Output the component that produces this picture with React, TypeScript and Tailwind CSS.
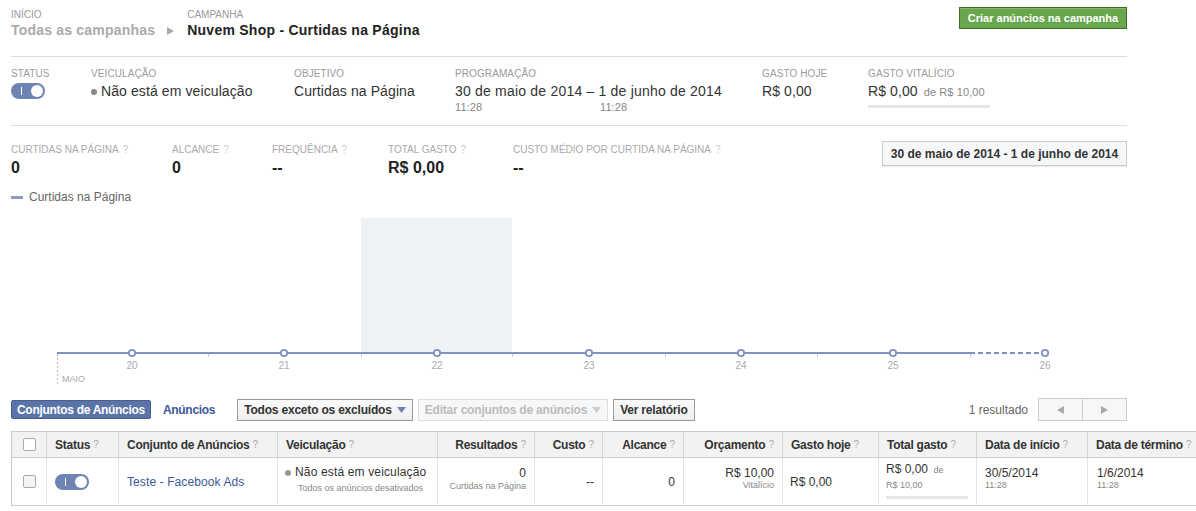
import React from "react";

const Q = () => <span className="font-normal text-[#aaa] text-[10px] ml-[3px] tracking-normal">?</span>;

const Toggle = () => (
  <div className="w-[34px] h-[16px] rounded-full bg-[#6d84b4] relative flex items-center">
    <div className="absolute left-[10px] top-[4px] w-[1px] h-[8px] bg-white" />
    <div className="absolute right-[2px] top-[2px] w-[12px] h-[12px] rounded-full bg-white" />
  </div>
);

const Label = ({ children }: { children: React.ReactNode }) => (
  <div className="text-[10px] leading-[12px] text-[#9a9a9a] uppercase">{children}</div>
);

const Chart = () => {
  const circles = [132, 284, 437, 589, 741, 893, 1045];
  const ticks = [208, 361, 512, 665, 817, 970];
  const labels = ["20", "21", "22", "23", "24", "25", "26"];
  return (
    <svg width={1196} height={176} className="block">
      <rect x={361} y={8} width={151} height={135} fill="#eef1f6" />
      <line x1={57} y1={143} x2={970} y2={143} stroke="#7f92c3" strokeWidth={2} />
      <line x1={970} y1={143} x2={1045} y2={143} stroke="#7f92c3" strokeWidth={2} strokeDasharray="5 3" />
      {ticks.map((t) => (
        <line key={t} x1={t + 0.5} y1={144} x2={t + 0.5} y2={147} stroke="#ccc" strokeWidth={1} />
      ))}
      <line x1={57.5} y1={144} x2={57.5} y2={174} stroke="#bbb" strokeWidth={1} strokeDasharray="2 2" />
      {circles.map((c) => (
        <circle key={c} cx={c} cy={143} r={3.2} fill="white" stroke="#7f92c3" strokeWidth={1.8} />
      ))}
      {circles.map((c, i) => (
        <text key={c} x={c} y={159} textAnchor="middle" fontSize={10} fill="#aaa" fontFamily="Liberation Sans, Arial, sans-serif">
          {labels[i]}
        </text>
      ))}
      <text x={62} y={172} fontSize={9} fill="#aaa" fontFamily="Liberation Sans, Arial, sans-serif">MAIO</text>
    </svg>
  );
};

const Dd = ({ color }: { color: string }) => (
  <svg width={9} height={6} className="ml-[5px]" viewBox="0 0 9 6">
    <polygon points="0,0 9,0 4.5,6" fill={color} />
  </svg>
);

export default function App() {
  const th = "h-[25px] px-2 text-[12px] font-bold tracking-[-0.25px] text-[#333] border-r border-[#d6d6d6] whitespace-nowrap";
  const td = "border-r border-[#e4e4e4]";
  return (
    <div className="w-[1196px] h-[511px] overflow-hidden bg-white font-['Liberation_Sans',Arial,sans-serif] text-[#333]">
      <div className="ml-[11px] w-[1116px]">
        {/* Header */}
        <div className="flex justify-between border-b border-[#ddd] h-[57px]">
          <div className="flex pt-[9px]">
            <div>
              <Label>Início</Label>
              <div className="text-[14px] leading-[18px] font-bold text-[#aaa] tracking-[0.2px]">Todas as campanhas</div>
            </div>
            <div className="mt-[18px] ml-[12px] mr-[13px]">
              <svg width={7} height={8} viewBox="0 0 7 8"><polygon points="0,0 7,4 0,8" fill="#aaa" /></svg>
            </div>
            <div>
              <Label>Campanha</Label>
              <div className="text-[14px] leading-[18px] font-bold text-[#222] tracking-[0.25px]">Nuvem Shop - Curtidas na Página</div>
            </div>
          </div>
          <div className="pt-[7px]">
            <button className="h-[22px] w-[168px] bg-[#69a74e] border border-[#3b6e22] text-white text-[11px] font-bold flex items-center justify-center shadow-[inset_0_1px_0_rgba(255,255,255,0.2)]">
              Criar anúncios na campanha
            </button>
          </div>
        </div>

        {/* Status row */}
        <div className="flex border-b border-[#ddd] h-[69px] pt-[11px] tracking-[0.1px]">
          <div className="w-[80px]">
            <Label>Status</Label>
            <div className="mt-[3px]"><Toggle /></div>
          </div>
          <div className="w-[203px]">
            <Label>Veiculação</Label>
            <div className="mt-[2px] text-[14px] leading-[18px] flex items-center">
              <span className="inline-block w-[6px] h-[6px] rounded-full bg-[#888] mr-[4px] mt-[1px]" />
              Não está em veiculação
            </div>
          </div>
          <div className="w-[161px]">
            <Label>Objetivo</Label>
            <div className="mt-[2px] text-[14px] leading-[18px]">Curtidas na Página</div>
          </div>
          <div className="w-[307px]">
            <Label>Programação</Label>
            <div className="mt-[2px] text-[14px] leading-[18px] tracking-[0.2px]">30 de maio de 2014 – 1 de junho de 2014</div>
            <div className="flex text-[11px] leading-[13px] text-[#888] mt-[1px]">
              <span className="w-[145px]">11:28</span>
              <span>11:28</span>
            </div>
          </div>
          <div className="w-[106px]">
            <Label>Gasto hoje</Label>
            <div className="mt-[2px] text-[14px] leading-[18px]">R$ 0,00</div>
          </div>
          <div>
            <Label>Gasto vitalício</Label>
            <div className="mt-[2px] text-[14px] leading-[18px]">
              R$ 0,00 <span className="text-[11px] text-[#888] ml-[2px]">de R$ 10,00</span>
            </div>
            <div className="mt-[4px] w-[122px] h-[3px] bg-[#e5e5e5]" />
          </div>
        </div>

        {/* Metrics row */}
        <div className="flex justify-between pt-[18px]">
          <div className="flex">
            {[
              ["Curtidas na Página", "0", 161],
              ["Alcance", "0", 100],
              ["Frequência", "--", 116],
              ["Total gasto", "R$ 0,00", 125],
              ["Custo médio por curtida na página", "--", 220],
            ].map(([l, v, w]) => (
              <div key={l as string} style={{ width: w as number }}>
                <div className="text-[10px] leading-[12px] text-[#aaa] uppercase">
                  {l}<span className="ml-[4px] text-[#ccc]">?</span>
                </div>
                <div className="text-[16px] leading-[20px] font-bold text-[#222] mt-[2px]">{v}</div>
              </div>
            ))}
          </div>
          <button className="mt-[-3px] h-[25px] w-[245px] border border-[#ccc] bg-[#f6f7f9] text-[12px] font-bold text-[#333] shadow-[0_1px_1px_rgba(0,0,0,0.08)]">
            30 de maio de 2014 - 1 de junho de 2014
          </button>
        </div>

        {/* Legend */}
        <div className="flex items-center mt-[12px] text-[12px] leading-[14px] text-[#666]">
          <span className="inline-block w-[12px] h-[3px] bg-[#8b9dc3] mr-[6px]" />
          Curtidas na Página
        </div>
      </div>

      {/* Chart */}
      <div className="mt-[6px]">
        <Chart />
      </div>

      {/* Toolbar */}
      <div className="ml-[11px] w-[1116px] flex items-center justify-between mt-[12px]">
        <div className="flex items-center">
          <div className="h-[19px] px-[5px] bg-[#5b74a8] border border-[#4a5f8e] text-white text-[12px] font-bold tracking-[-0.3px] flex items-center rounded-[2px]">
            Conjuntos de Anúncios
          </div>
          <div className="ml-[12px] text-[12px] font-bold tracking-[-0.3px] text-[#3b5998]">Anúncios</div>
          <button className="ml-[22px] h-[22px] px-[6px] border border-[#999] bg-[linear-gradient(#fafafa,#eee)] text-[12px] font-bold tracking-[-0.2px] text-[#333] flex items-center">
            Todos exceto os excluídos <Dd color="#6d84b4" />
          </button>
          <button className="ml-[5px] h-[22px] px-[6px] border border-[#ddd] bg-[#f6f7f9] text-[12px] font-bold tracking-[-0.2px] text-[#bbb] flex items-center">
            Editar conjuntos de anúncios <Dd color="#ccc" />
          </button>
          <button className="ml-[5px] h-[22px] px-[6px] border border-[#999] bg-[linear-gradient(#fafafa,#eee)] text-[12px] font-bold tracking-[-0.2px] text-[#333] flex items-center">
            Ver relatório
          </button>
        </div>
        <div className="flex items-center">
          <span className="text-[12px] text-[#666] mr-[10px]">1 resultado</span>
          <div className="flex border border-[#ccc] h-[23px]">
            <div className="w-[44px] flex items-center justify-center bg-[#f6f7f9] border-r border-[#ccc]">
              <svg width={7} height={8} viewBox="0 0 7 8"><polygon points="7,0 0,4 7,8" fill="#aaa" /></svg>
            </div>
            <div className="w-[43px] flex items-center justify-center bg-[#f6f7f9]">
              <svg width={7} height={8} viewBox="0 0 7 8"><polygon points="0,0 7,4 0,8" fill="#aaa" /></svg>
            </div>
          </div>
        </div>
      </div>

      {/* Table */}
      <div className="ml-[11px] mt-[10px] w-[1210px]">
        <div className="flex bg-[#f2f2f2] border border-[#ccc] items-center">
          <div className={`${th} w-[35px] flex items-center justify-center`}>
            <div className="w-[13px] h-[13px] border border-[#aaa] rounded-[2px] bg-white" />
          </div>
          <div className={`${th} w-[72px] flex items-center`}>Status<Q /></div>
          <div className={`${th} w-[159px] flex items-center`}>Conjunto de Anúncios<Q /></div>
          <div className={`${th} w-[160px] flex items-center`}>Veiculação<Q /></div>
          <div className={`${th} w-[97px] flex items-center justify-end`}>Resultados<Q /></div>
          <div className={`${th} w-[68px] flex items-center justify-end`}>Custo<Q /></div>
          <div className={`${th} w-[81px] flex items-center justify-end`}>Alcance<Q /></div>
          <div className={`${th} w-[99px] flex items-center justify-end`}>Orçamento<Q /></div>
          <div className={`${th} w-[96px] flex items-center`}>Gasto hoje<Q /></div>
          <div className={`${th} w-[98px] flex items-center`}>Total gasto<Q /></div>
          <div className={`${th} w-[111px] flex items-center`}>Data de início<Q /></div>
          <div className={`${th} w-[130px] flex items-center`}>Data de término<Q /></div>
        </div>
        <div className="flex border-x border-b border-[#ccc] h-[48px] text-[12px]">
          <div className={`${td} w-[35px] flex items-center justify-center`}>
            <div className="w-[13px] h-[13px] border border-[#aaa] rounded-[2px] bg-[#f4f4f4]" />
          </div>
          <div className={`${td} w-[72px] flex items-center px-2`}><Toggle /></div>
          <div className={`${td} w-[159px] flex items-center px-2 text-[#3b5998] tracking-[0.1px]`}>Teste - Facebook Ads</div>
          <div className={`${td} w-[160px] px-[7px] pt-[7px] whitespace-nowrap`}>
            <div className="flex items-center leading-[15px] tracking-[0.15px]">
              <span className="inline-block w-[6px] h-[6px] rounded-full bg-[#999] mr-[4px]" />
              Não está em veiculação
            </div>
            <div className="text-[9px] text-[#888] mt-[2px] ml-[13px]">Todos os anúncios desativados</div>
          </div>
          <div className={`${td} w-[97px] px-2 pt-[9px] text-right whitespace-nowrap`}>
            <div className="leading-[13px]">0</div>
            <div className="text-[9px] text-[#888] leading-[12px]">Curtidas na Página</div>
          </div>
          <div className={`${td} w-[68px] px-2 flex items-center justify-end`}>--</div>
          <div className={`${td} w-[81px] px-2 flex items-center justify-end`}>0</div>
          <div className={`${td} w-[99px] px-2 pt-[9px] text-right`}>
            <div className="leading-[13px]">R$ 10,00</div>
            <div className="text-[9px] text-[#888] leading-[11px]">Vitalício</div>
          </div>
          <div className={`${td} w-[96px] px-[7px] flex items-center`}>R$ 0,00</div>
          <div className={`${td} w-[98px] px-[7px] pt-[4px]`}>
            <div className="leading-[14px]">R$ 0,00 <span className="text-[9px] text-[#888] ml-[2px]">de</span></div>
            <div className="text-[9px] text-[#888] leading-[12px] mt-[2px]">R$ 10,00</div>
            <div className="mt-[5px] w-[82px] h-[3px] bg-[#e5e5e5]" />
          </div>
          <div className={`${td} w-[111px] px-2 pt-[9px]`}>
            <div className="leading-[13px]">30/5/2014</div>
            <div className="text-[9px] text-[#888] leading-[11px]">11:28</div>
          </div>
          <div className="w-[130px] px-[9px] pt-[9px]">
            <div className="leading-[13px]">1/6/2014</div>
            <div className="text-[9px] text-[#888] leading-[11px]">11:28</div>
          </div>
        </div>
      </div>
    </div>
  );
}
